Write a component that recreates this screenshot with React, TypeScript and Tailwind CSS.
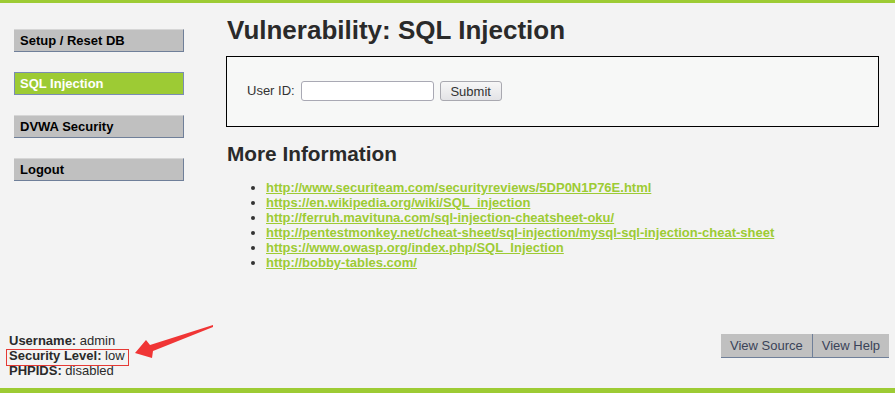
import React from 'react'

const links = [
  'http://www.securiteam.com/securityreviews/5DP0N1P76E.html',
  'https://en.wikipedia.org/wiki/SQL_injection',
  'http://ferruh.mavituna.com/sql-injection-cheatsheet-oku/',
  'http://pentestmonkey.net/cheat-sheet/sql-injection/mysql-sql-injection-cheat-sheet',
  'https://www.owasp.org/index.php/SQL_Injection',
  'http://bobby-tables.com/',
]

const menu = [
  { label: 'Setup / Reset DB', active: false },
  { label: 'SQL Injection', active: true },
  { label: 'DVWA Security', active: false },
  { label: 'Logout', active: false },
]

export default function App() {
  return (
    <div className="relative flex h-[393px] w-[895px] flex-col overflow-hidden bg-[#f3f3f3] font-['Liberation_Sans',Arial,sans-serif] text-[13px] text-[#2a2a2a]">
      {/* barra superior */}
      <div className="h-[3px] bg-[#9dcb34]"></div>

      <div className="flex">
        {/* menu lateral */}
        <div className="flex w-[226px] flex-col gap-[20px] pl-[14px] pr-[42px] pt-[26px]">
          {menu.map((m) => (
            <div
              key={m.label}
              className={
                m.active
                  ? 'flex h-[23px] items-center border border-[#7a8cb4] bg-[#9dcb34] pl-[5px] font-bold text-white'
                  : 'flex h-[23px] items-center border-t border-t-[#d6d6d6] border-b border-r border-b-[#6f7f99] border-r-[#6f7f99] bg-[#c0c0c0] pl-[6px] font-bold text-black'
              }
            >
              {m.label}
            </div>
          ))}
        </div>

        {/* conteudo */}
        <div className="flex-1 pt-[12px] pr-[16px]">
          <h1 className="pl-[1px] text-[26px] font-bold leading-[30px] text-[#2a2a2a]">Vulnerability: SQL Injection</h1>

          <div className="mt-[11px] h-[71px] border border-black bg-[#f7f8f7] pl-[20px] pt-[24px]">
            <div className="flex items-center">
              <span className="mr-[6px] text-[#333]">User ID:</span>
              <input type="text" className="h-[20px] w-[133px] rounded-[3px] border border-[#a9a9b4] bg-white" />
              <button className="ml-[6px] h-[20px] w-[62px] rounded-[3px] border border-[#a9a9b0] bg-gradient-to-b from-[#f7f7f7] to-[#e3e3e6] text-[13px] text-[#333]">
                Submit
              </button>
            </div>
          </div>

          <h2 className="mt-[15px] pl-[1px] text-[20.8px] font-bold leading-[24px] text-[#2a2a2a]">More Information</h2>
          <ul className="mt-[14px] list-disc pl-[40px] text-[13px] leading-[15px] marker:text-[#333]">
            {links.map((l) => (
              <li key={l}>
                <a href="#" className="font-bold text-[#9dcb34] underline">
                  {l}
                </a>
              </li>
            ))}
          </ul>
        </div>
      </div>

      <div className="flex-1"></div>

      {/* rodape com info do usuario e botoes */}
      <div className="mb-[10px] flex items-start justify-between pl-[9px] pr-[6px]">
        <div className="leading-[15px]">
          <div>
            <b>Username:</b> admin
          </div>
          <div className="relative">
            <b>Security Level:</b> low
            <div className="absolute left-[-3px] top-[1px] h-[17px] w-[123px] border border-[#e53935]"></div>
          </div>
          <div>
            <b>PHPIDS:</b> disabled
          </div>
        </div>
        <div className="mt-[1px] flex">
          <button className="h-[24px] border-b border-r border-[#6f7f99] bg-[#c0c0c0] px-[9px] text-[13px] text-[#3a4358]">View Source</button>
          <button className="h-[24px] border-b border-[#6f7f99] bg-[#c0c0c0] px-[9px] text-[13px] text-[#3a4358]">View Help</button>
        </div>
      </div>

      {/* barra inferior */}
      <div className="h-[5px] bg-[#9dcb34]"></div>

      {/* seta vermelha (anotacao) */}
      <svg className="pointer-events-none absolute left-0 top-0" width="895" height="393">
        <polygon points="135,353 146,340 150,345 213,325 213,327 153,351 152,358" fill="#f03535" />
      </svg>
    </div>
  )
}
